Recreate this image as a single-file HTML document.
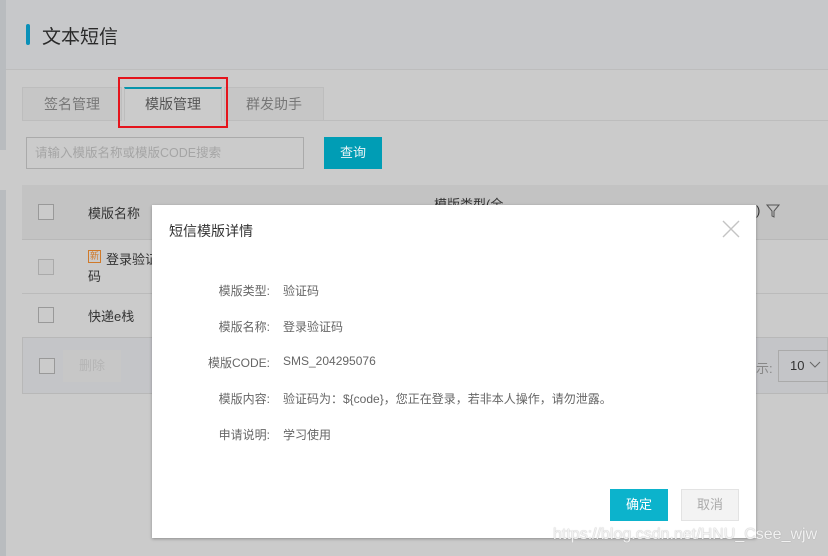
<!DOCTYPE html>
<html><head><meta charset="utf-8"><style>
*{margin:0;padding:0;box-sizing:border-box}
body{width:828px;height:556px;overflow:hidden;background:#cbcbcb;font-family:"Liberation Sans","Noto Sans CJK SC",sans-serif;position:relative;color:#333}
.a{position:absolute}
.cb{position:absolute;width:16px;height:16px;border:1px solid #999;background:#cbcbcb}
</style></head><body>
<div class="a" style="left:0;top:0;width:828px;height:70px;background:#c7c8ca;border-bottom:1px solid #bdbdbd"></div>
<div class="a" style="left:0;top:0;width:6px;height:150px;background:#b9bcbf"></div>
<div class="a" style="left:0;top:190px;width:6px;height:366px;background:#b9bcbf"></div>
<div class="a" style="left:26px;top:24px;width:4px;height:21px;background:#0a90b8;border-radius:2px"></div>
<div class="a" style="left:42px;top:22px;font-size:19px;color:#2a2a2a">文本短信</div>
<div class="a" style="left:22px;top:87px;width:100px;height:34px;background:#c6c6c6;border:1px solid #bdbdbd;font-size:14px;color:#777;text-align:center;line-height:32px">签名管理</div>
<div class="a" style="left:124px;top:87px;width:98px;height:34px;background:#cbcbcb;border:1px solid #bdbdbd;border-bottom:none;border-top:2px solid #0795ab;font-size:14px;color:#555;text-align:center;line-height:30px">模版管理</div>
<div class="a" style="left:224px;top:87px;width:100px;height:34px;background:#c6c6c6;border:1px solid #bdbdbd;font-size:14px;color:#777;text-align:center;line-height:32px">群发助手</div>
<div class="a" style="left:324px;top:120px;width:504px;height:1px;background:#bdbdbd"></div>
<div class="a" style="left:118px;top:77px;width:110px;height:51px;border:2px solid #e5141c"></div>
<div class="a" style="left:26px;top:137px;width:278px;height:32px;border:1px solid #aaa;font-size:12.5px;color:#a5a5a5;line-height:30px;padding-left:8px">请输入模版名称或模版CODE搜索</div>
<div class="a" style="left:324px;top:137px;width:58px;height:32px;background:#009db5;color:#e8f4f6;font-size:13px;text-align:center;line-height:32px">查询</div>
<div class="a" style="left:22px;top:185px;width:806px;height:55px;background:#c3c3c3;border-bottom:1px solid #b8b8b8"></div>
<div class="cb" style="left:38px;top:204px"></div>
<div class="a" style="left:88px;top:203px;font-size:13px">模版名称</div>
<div class="a" style="left:434px;top:194px;font-size:13px">模版类型(全</div>
<div class="a" style="left:756px;top:203px;font-size:13px">)</div>
<svg class="a" style="left:766px;top:204px" width="14" height="14"><path d="M1 1H13L8 7V13L6 12V7Z" fill="none" stroke="#555" stroke-width="1"/></svg>
<div class="cb" style="left:38px;top:259px;background:#c8c8c8;border-color:#aaa"></div>
<div class="a" style="left:88px;top:250px;width:13px;height:13px;border:1px solid #d07a2a;font-size:9px;color:#d07a2a;text-align:center;line-height:11px">新</div>
<div class="a" style="left:106px;top:249px;font-size:13px">登录验证</div>
<div class="a" style="left:88px;top:266px;font-size:13px">码</div>
<div class="a" style="left:22px;top:293px;width:806px;height:1px;background:#bbb"></div>
<div class="cb" style="left:38px;top:307px"></div>
<div class="a" style="left:88px;top:306px;font-size:13px">快递e栈</div>
<div class="a" style="left:22px;top:337px;width:806px;height:57px;background:#c4c5c8;border:1px solid #b8b8b8"></div>
<div class="cb" style="left:39px;top:358px"></div>
<div class="a" style="left:63px;top:350px;width:58px;height:32px;background:#c7c7c7;font-size:13px;color:#b5b5b5;text-align:center;line-height:32px">删除</div>
<div class="a" style="left:756px;top:358px;font-size:13px;color:#888">示:</div>
<div class="a" style="left:778px;top:350px;width:52px;height:32px;border:1px solid #aaa;font-size:13px;line-height:30px;padding-left:11px">10</div>
<svg class="a" style="left:809px;top:361px" width="12" height="8"><path d="M1 1L6 6L11 1" fill="none" stroke="#666" stroke-width="1"/></svg>
<div class="a" style="left:152px;top:205px;width:604px;height:333px;background:#fff;box-shadow:0 1px 3px rgba(0,0,0,.3)">
<div class="a" style="left:17px;top:16px;font-size:14px;color:#333">短信模版详情</div>
<svg class="a" style="left:570px;top:15px" width="18" height="18"><path d="M1 1L17 17M17 1L1 17" stroke="#c4c4c4" stroke-width="1.4"/></svg>
<div style="position:absolute;left:0;top:77px;width:604px;font-size:12px;color:#666">
<div class="a" style="left:0;top:0;width:118px;text-align:right">模版类型:</div><div class="a" style="left:131px;top:0">验证码</div>
<div class="a" style="left:0;top:36px;width:118px;text-align:right">模版名称:</div><div class="a" style="left:131px;top:36px">登录验证码</div>
<div class="a" style="left:0;top:72px;width:118px;text-align:right">模版CODE:</div><div class="a" style="left:131px;top:72px">SMS_204295076</div>
<div class="a" style="left:0;top:108px;width:118px;text-align:right">模版内容:</div><div class="a" style="left:131px;top:108px">验证码为：${code}，您正在登录，若非本人操作，请勿泄露。</div>
<div class="a" style="left:0;top:144px;width:118px;text-align:right">申请说明:</div><div class="a" style="left:131px;top:144px">学习使用</div>
</div>
<div class="a" style="left:458px;top:284px;width:58px;height:32px;background:#0cb3cc;color:#fff;font-size:13px;text-align:center;line-height:32px">确定</div>
<div class="a" style="left:529px;top:284px;width:58px;height:32px;background:#f3f3f3;border:1px solid #e3e3e3;color:#aaa;font-size:13px;text-align:center;line-height:30px">取消</div>
</div>
<div class="a" style="left:553px;top:526px;font-size:16px;color:#f2f2f2;text-shadow:0 0 1px #999">https://blog.csdn.net/HNU_Csee_wjw</div>
</body></html>
